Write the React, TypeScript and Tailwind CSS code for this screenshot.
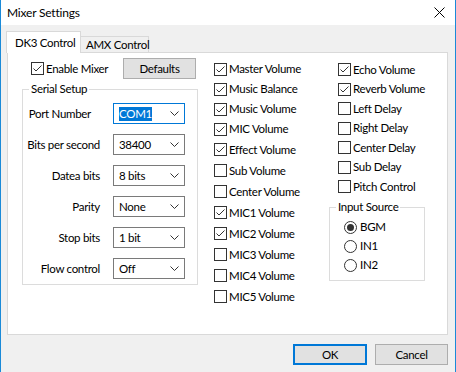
import type { ReactNode } from "react";

const col2 = [
  { label: "Master Volume", checked: true, h: "h-[20px]" },
  { label: "Music Balance", checked: true, h: "h-[20px]" },
  { label: "Music Volume", checked: true, h: "h-[20px]" },
  { label: "MIC Volume", checked: true, h: "h-[20px]" },
  { label: "Effect Volume", checked: true, h: "h-[21px]" },
  { label: "Sub Volume", checked: false, h: "h-[21px]" },
  { label: "Center Volume", checked: false, h: "h-[21px]" },
  { label: "MIC1 Volume", checked: true, h: "h-[21px]" },
  { label: "MIC2 Volume", checked: true, h: "h-[21px]" },
  { label: "MIC3 Volume", checked: false, h: "h-[21px]" },
  { label: "MIC4 Volume", checked: false, h: "h-[21px]" },
  { label: "MIC5 Volume", checked: false, h: "h-[21px]" },
];

const col3 = [
  { label: "Echo Volume", checked: true },
  { label: "Reverb Volume", checked: true },
  { label: "Left Delay", checked: false },
  { label: "Right Delay", checked: false },
  { label: "Center Delay", checked: false },
  { label: "Sub Delay", checked: false },
  { label: "Pitch Control", checked: false },
];

const serial = [
  { label: "Port Number", value: "COM1", focused: true },
  { label: "Bits per second", value: "38400" },
  { label: "Datea bits", value: "8 bits" },
  { label: "Parity", value: "None" },
  { label: "Stop bits", value: "1 bit" },
  { label: "Flow control", value: "Off" },
];

function Box({ checked }: { checked: boolean }) {
  return (
    <span className="flex h-[13px] w-[13px] shrink-0 items-center justify-center border border-[#333333] bg-white">
      {checked ? (
        <svg width="11" height="11" viewBox="0 0 11 11">
          <polyline
            points="1.5,5.5 4,8 9.5,2.5"
            fill="none"
            stroke="#333333"
            strokeWidth="1"
          />
        </svg>
      ) : null}
    </span>
  );
}

function Check({ label, checked }: { label: string; checked: boolean }) {
  return (
    <div className="flex items-center gap-[2px]">
      <Box checked={checked} />
      <span>{label}</span>
    </div>
  );
}

function Radio({ label, checked }: { label: string; checked: boolean }) {
  return (
    <div className="flex h-[19px] items-center gap-[3px]">
      <span className="flex h-[13px] w-[13px] items-center justify-center rounded-full border border-[#333333] bg-white">
        {checked ? <span className="h-[7px] w-[7px] rounded-full bg-[#333333]" /> : null}
      </span>
      <span>{label}</span>
    </div>
  );
}

function Combo({ value, focused }: { value: string; focused?: boolean }) {
  return (
    <div
      className={
        focused
          ? "flex h-[21px] w-[72px] shrink-0 items-center justify-between border border-[#0078d7] bg-white pl-[5px] pr-[5px]"
          : "flex h-[21px] w-[72px] shrink-0 items-center justify-between border border-[#7a7a7a] bg-white pl-[5px] pr-[5px]"
      }
    >
      {focused ? (
        <span className="bg-[#0078d7] leading-[14px] text-white">{value}</span>
      ) : (
        <span>{value}</span>
      )}
      <svg width="9" height="5" viewBox="0 0 9 5">
        <polyline points="0.5,0.5 4.5,4.5 8.5,0.5" fill="none" stroke="#333333" strokeWidth="1" />
      </svg>
    </div>
  );
}

function Group({ title, className, children }: { title: string; className: string; children: ReactNode }) {
  return (
    <fieldset className={"border border-[#dcdcdc] " + className}>
      <legend className="ml-[6px] px-[2px] leading-[16px]">{title}</legend>
      {children}
    </fieldset>
  );
}

function Button({ children, primary }: { children: ReactNode; primary?: boolean }) {
  return (
    <button
      className={
        primary
          ? "h-[21px] w-[74px] border-2 border-[#0078d7] bg-[#e1e1e1]"
          : "h-[21px] w-[73px] border border-[#adadad] bg-[#e1e1e1]"
      }
    >
      {children}
    </button>
  );
}

export default function App() {
  return (
    <div className="h-[372px] w-[456px] whitespace-nowrap bg-white font-['Lato',sans-serif] text-[11.5px] leading-[16px] tracking-[-0.3px] text-black">
      <div className="flex h-full w-[456px] flex-col border-x border-[#1a8ad8]">
        <div className="flex h-[25px] items-center justify-between bg-white pl-[6px] pr-[10px] text-[12px] tracking-[-0.2px]">
          <span>Mixer Settings</span>
          <svg width="11" height="11" viewBox="0 0 11 11">
            <path d="M0.5 0.5 L10.5 10.5 M10.5 0.5 L0.5 10.5" stroke="#000" strokeWidth="1" />
          </svg>
        </div>

        <div className="flex flex-1 flex-col bg-[#f0f0f0] pl-[6px] pt-[6px]">
          <div className="flex h-[21px] items-end">
            <div className="z-10 -mb-px ml-[-1px] flex h-[22px] w-[75px] items-start border border-b-0 border-[#d9d9d9] bg-white pl-[8px] pt-[3px]">
              DK3 Control
            </div>
            <div className="flex h-[16px] w-[68px] items-center border border-b-0 border-l-0 border-[#d9d9d9] bg-[#f0f0f0] pl-[5px]">
              AMX Control
            </div>
          </div>

          <div className="flex h-[283px] w-[441px] border border-[#d9d9d9] bg-white pl-[14px]">
            <div className="flex w-[176px] shrink-0 flex-col pt-[5px]">
              <div className="flex h-[21px] items-center">
                <div className="ml-[9px] w-[92px]">
                  <Check label="Enable Mixer" checked />
                </div>
                <Button>Defaults</Button>
              </div>
              <Group title="Serial Setup" className="mt-[2px] h-[204px] w-[176px]">
                <div className="flex flex-col gap-[10px] pt-[6px]">
                  {serial.map((row) => (
                    <div key={row.label} className="flex items-center gap-[13px]">
                      <span
                        className={
                          row.focused
                            ? "w-[77px] shrink-0 pr-[9px] text-right"
                            : "w-[77px] shrink-0 text-right"
                        }
                      >
                        {row.label}
                      </span>
                      <Combo value={row.value} focused={row.focused} />
                    </div>
                  ))}
                </div>
              </Group>
            </div>

            <div className="ml-[16px] flex w-[108px] shrink-0 flex-col pt-[6px]">
              {col2.map((c) => (
                <div key={c.label} className={"flex items-center " + c.h}>
                  <Check label={c.label} checked={c.checked} />
                </div>
              ))}
            </div>

            <div className="ml-[7px] flex w-[96px] shrink-0 flex-col pt-[7px]">
              {col3.map((c) => (
                <div key={c.label} className="flex h-[19.5px] items-center pl-[9px]">
                  <Check label={c.label} checked={c.checked} />
                </div>
              ))}
              <Group title="Input Source" className="mt-[2.5px] h-[82px] w-[96px]">
                <div className="flex flex-col pl-[14px] pt-[2.5px]">
                  <Radio label="BGM" checked />
                  <Radio label="IN1" checked={false} />
                  <Radio label="IN2" checked={false} />
                </div>
              </Group>
            </div>
          </div>

          <div className="flex w-[441px] justify-end gap-[8px] pt-[9px]">
            <Button primary>OK</Button>
            <Button>Cancel</Button>
          </div>
        </div>
      </div>
    </div>
  );
}
